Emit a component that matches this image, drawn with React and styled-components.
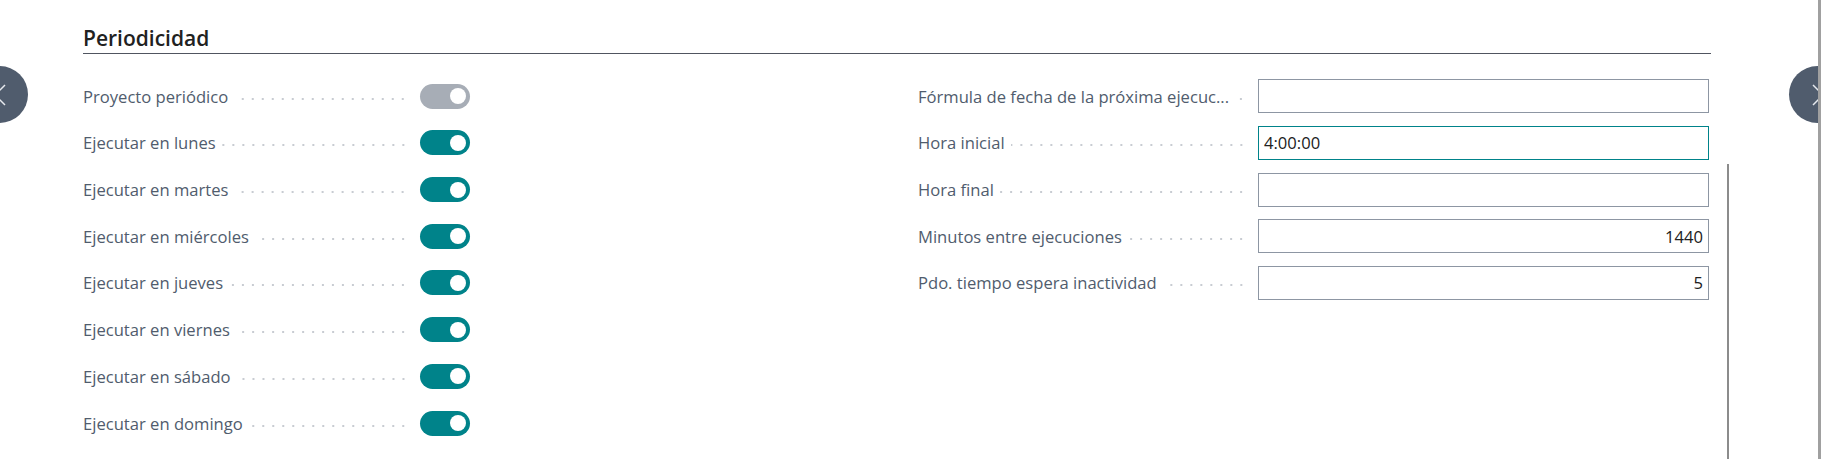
import React from "react";
import styled, { createGlobalStyle } from "styled-components";

const GlobalStyle = createGlobalStyle`
    html, body {
        margin: 0;
        padding: 0;
        background: #ffffff;
    }
    body {
        font-family: "Open Sans", "Noto Sans", "Liberation Sans", sans-serif;
    }
`;

const toggles = [
    { label: "Proyecto periódico", on: false },
    { label: "Ejecutar en lunes", on: true },
    { label: "Ejecutar en martes", on: true },
    { label: "Ejecutar en miércoles", on: true },
    { label: "Ejecutar en jueves", on: true },
    { label: "Ejecutar en viernes", on: true },
    { label: "Ejecutar en sábado", on: true },
    { label: "Ejecutar en domingo", on: true },
];

const inputs = [
    { label: "Fórmula de fecha de la próxima ejecuc...", value: "" },
    { label: "Hora inicial", value: "4:00:00", focused: true },
    { label: "Hora final", value: "" },
    { label: "Minutos entre ejecuciones", value: "1440", numeric: true },
    { label: "Pdo. tiempo espera inactividad", value: "5", numeric: true },
];

const Chevron = ({ dir }) => (
    <svg width="12" height="22" viewBox="0 0 12 22" aria-hidden="true">
        <path
            d={dir === "left" ? "M11 1 L1 11 L11 21" : "M1 1 L11 11 L1 21"}
            fill="none"
            stroke="#e6e9ee"
            strokeWidth="1.5"
        />
    </svg>
);

const App = () => {
    return (
        <Page>
            <GlobalStyle />
            <Section>
                <SectionTitle>Periodicidad</SectionTitle>
                <FieldGrid>
                    <Column>
                        {toggles.map((t) => (
                            <Field key={t.label}>
                                <LabelCell $w={337}>
                                    <LabelText>{t.label}</LabelText>
                                    <Leader />
                                </LabelCell>
                                <Switch $on={t.on}>
                                    <Knob />
                                </Switch>
                            </Field>
                        ))}
                    </Column>
                    <Column>
                        {inputs.map((f) => (
                            <Field key={f.label} $stretch>
                                <LabelCell $w={340}>
                                    <LabelText>{f.label}</LabelText>
                                    <Leader />
                                </LabelCell>
                                <TextBox $focused={f.focused} $numeric={f.numeric}>
                                    {f.value}
                                </TextBox>
                            </Field>
                        ))}
                    </Column>
                </FieldGrid>
            </Section>
            <NavButton $side="left">
                <Chevron dir="left" />
            </NavButton>
            <NavButton $side="right">
                <Chevron dir="right" />
            </NavButton>
            <InnerScroll />
            <PageScroll />
        </Page>
    );
};

const Page = styled.div`
    position: relative;
    height: 459px;
    overflow: hidden;
    background: #ffffff;
`;

const Section = styled.div`
    padding: 0 110px 0 83px;
`;

const SectionTitle = styled.h2`
    margin: 0;
    padding: 23.5px 0 1.6px;
    font-size: 21px;
    line-height: 28px;
    font-weight: 600;
    color: #212121;
    border-bottom: 1px solid #505560;
`;

const FieldGrid = styled.div`
    display: grid;
    grid-template-columns: 1fr 1fr;
    column-gap: 44px;
    margin: 18.75px 2px 0 0;
`;

const Column = styled.div`
    display: flex;
    flex-direction: column;
`;

const Field = styled.div`
    display: flex;
    align-items: center;
    height: 46.7px;
    width: ${(p) => (p.$stretch ? "100%" : "387px")};
`;

const LabelCell = styled.div`
    display: flex;
    align-items: center;
    width: ${(p) => p.$w}px;
    flex-shrink: 0;
    padding-right: 12px;
    box-sizing: border-box;
`;

const LabelText = styled.span`
    flex-shrink: 0;
    white-space: nowrap;
    font-size: 16.6px;
    color: #505c6d;
`;

const Leader = styled.span`
    flex: 1 1 0;
    min-width: 0;
    height: 2px;
    margin: 5px 0 0 6px;
    background-image: radial-gradient(circle, #c8ccd2 0.9px, transparent 1.2px);
    background-size: 10px 2px;
    background-position: right center;
    background-repeat: repeat-x;
`;

const Switch = styled.span`
    display: inline-flex;
    align-items: center;
    justify-content: flex-end;
    width: 50px;
    height: 25px;
    padding-right: 4px;
    box-sizing: border-box;
    border-radius: 13px;
    background: ${(p) => (p.$on ? "#00838a" : "#a7adb6")};
`;

const Knob = styled.span`
    width: 16px;
    height: 16px;
    border-radius: 50%;
    background: #ffffff;
`;

const TextBox = styled.div`
    flex: 1;
    height: 34px;
    box-sizing: border-box;
    border: 1px solid ${(p) => (p.$focused ? "#00838a" : "#8d96a3")};
    padding: 0 5px;
    display: flex;
    align-items: center;
    justify-content: ${(p) => (p.$numeric ? "flex-end" : "flex-start")};
    font-size: 16.6px;
    color: #212121;
`;

const NavButton = styled.div`
    position: absolute;
    top: 66px;
    ${(p) => (p.$side === "left" ? "left: -29px;" : "left: 1789px;")}
    width: 57px;
    height: 57px;
    border-radius: 50%;
    background: #505c6d;
    display: flex;
    align-items: center;
    justify-content: center;
`;

const InnerScroll = styled.div`
    position: absolute;
    left: 1727px;
    top: 164px;
    bottom: 0;
    width: 2px;
    background: #8c8c8c;
`;

const PageScroll = styled.div`
    position: absolute;
    right: 0;
    top: 0;
    bottom: 0;
    width: 3px;
    background: #a0a0a0;
`;

export default App;
